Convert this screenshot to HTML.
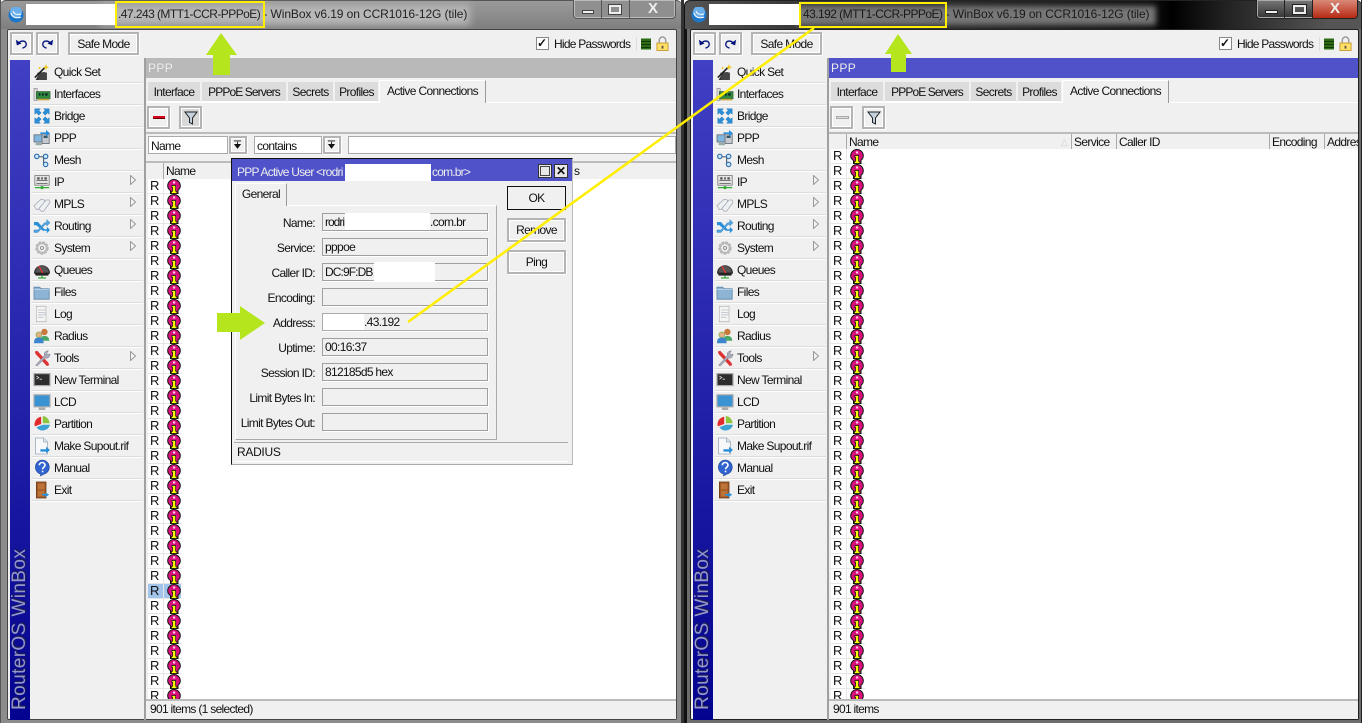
<!DOCTYPE html>
<html><head><meta charset="utf-8"><style>
html,body{margin:0;padding:0;width:1366px;height:723px;overflow:hidden;background:#fff}
*{box-sizing:border-box}
body{font-family:"Liberation Sans",sans-serif;font-size:12px;letter-spacing:-.65px;color:#111;position:relative}
div,svg,span.p{position:absolute}
.t{white-space:nowrap;line-height:14px;height:14px}
.b{background:#f0f0f0;border:2px solid #b4b4b4;outline:1px solid #fff;outline-offset:-3px;box-shadow:1px 1px 0 #fff}
.sep{height:2px;left:32px;width:111px;background:#dcdcdc;border-bottom:1px solid #fff}
.tab{background:#dcdcdc;height:20px;top:82px;text-align:center;line-height:21px;border-bottom:1px solid #fff}
.f{background:#f0f0f0;border:1px solid #a0a0a0;box-shadow:1px 1px 0 #fff;left:322px;width:166px;height:18px;padding:0 0 0 2px;line-height:17px;white-space:nowrap}
.l{right:1051px;text-align:right;white-space:nowrap;line-height:14px}
.rr{white-space:pre;line-height:15px;font-size:13px;letter-spacing:0;overflow:hidden}
.m{width:22px;height:22px;transform:translate(-2px,0) scale(.8)}
.tt{font-size:12px;letter-spacing:-.1px;color:#222}
.tt span{letter-spacing:-.55px}
.rb{left:0;color:#9397cc;font-size:19px;line-height:20px;letter-spacing:.4px;white-space:nowrap;text-shadow:1px 1px 1px #224;width:160px;height:20px;top:620px;transform:rotate(-90deg)}
</style></head><body>
<svg width="0" height="0" style="left:0;top:0">
<defs>
<symbol id="i" viewBox="0 0 14 15"><path d="M7 .5a6.300 6.300 0 0 1 6.300 6.300c0 2-1 3.500-2.300 4.400V14.500H3.500V11.500C1.800 10.500.7 8.800.7 6.800A6.300 6.300 0 0 1 7 .5z" fill="#d8107c" stroke="#111"/><rect x="6" y="2.500" width="2.200" height="2" fill="#f8d0e8"/><path d="M5 6.500h3.600v5.800h1.200v2.200H4.400v-2.200h1.200V8.500H5z" fill="#ff0" stroke="#111" stroke-width=".7"/></symbol>
<pattern id="ip" width="34" height="15" patternUnits="userSpaceOnUse"><use href="#i" x="19" y="0" width="14" height="15"/></pattern>
<symbol id="s1" viewBox="0 0 22 22"><path d="M3 21l5-9h9v9z" fill="#333"/><path d="M5 12l9-1 3 1v9H7z" fill="#444"/><path d="M2 18L14 6" stroke="#222" stroke-width="2"/><path d="M16 1l1 3 3 1-3 1-1 3-1-3-3-1 3-1z" fill="#f1c40f"/><circle cx="8" cy="6" r="1.200" fill="#f1c40f"/></symbol>
<symbol id="s2" viewBox="0 0 22 22"><rect x="1" y="4" width="4" height="15" fill="#ddd" stroke="#999"/><rect x="4" y="8" width="17" height="9" fill="#2f8b3c" stroke="#3e5f3e"/><path d="M7 10h2v3H7zM11 10h2v3h-2zM15 10h3v3h-3z" fill="#123"/><path d="M6 17h14v2H6z" fill="#c9a640"/></symbol>
<symbol id="s3" viewBox="0 0 22 22"><path d="M2 2h7l-2 2 3 3-3 3-3-3-2 2zM20 2v7l-2-2-3 3-3-3 3-3-2-2zM2 20v-7l2 2 3-3 3 3-3 3 2 2zM20 20h-7l2-2-3-3 3-3 3 3 2-2z" fill="#2a8ed8" stroke="#1868a8" stroke-width=".5"/></symbol>
<symbol id="s4" viewBox="0 0 22 22"><rect x="1" y="7" width="11" height="9" fill="#7fb6dc" stroke="#667"/><rect x="11" y="6" width="9" height="12" fill="#c4c9cf" stroke="#667"/><rect x="13" y="8" width="5" height="3" fill="#356"/><rect x="3" y="17" width="8" height="3" fill="#9aa"/><path d="M9 4h7V1l5 4-5 4V6H9z" fill="#2a8ed8"/></symbol>
<symbol id="s5" viewBox="0 0 22 22"><path d="M5 7h8v9h4" fill="none" stroke="#567" stroke-width="1.500"/><circle cx="4.500" cy="6.500" r="2.800" fill="#cfe4f7" stroke="#2a6fb0" stroke-width="1.400"/><circle cx="15.500" cy="6.500" r="2.800" fill="#cfe4f7" stroke="#2a6fb0" stroke-width="1.400"/><circle cx="15.500" cy="16.500" r="2.800" fill="#cfe4f7" stroke="#2a6fb0" stroke-width="1.400"/></symbol>
<symbol id="s6" viewBox="0 0 22 22"><rect x="2" y="3" width="18" height="12" fill="#e4e4e4" stroke="#777"/><path d="M4 9h14M4 13h14" stroke="#555"/><path d="M5 5h3v3H5zM10 5h2v3h-2zM14 5h3v3h-3z" fill="#555"/><path d="M2 18h18" stroke="#3a3" stroke-width="1.500"/><circle cx="11" cy="18" r="2" fill="#3a3"/></symbol>
<symbol id="s7" viewBox="0 0 22 22"><path d="M1 13L10 5l4 1 0 3-8 9-2 0z" fill="#eef1f2" stroke="#aab"/><path d="M7 17L16 6l4 0 1 3-8 11h-3z" fill="#eef1f2" stroke="#aab"/></symbol>
<symbol id="s8" viewBox="0 0 22 22"><path d="M1 6h5l8 9h3v-3l4 4-4 4v-3h-5L4 10H1z" fill="#2a8ed8"/><path d="M1 16h5l8-9h3V3l4 4-4 4V9h-2L6 19H1z" fill="#4fa6e6" stroke="#1868a8" stroke-width=".5"/></symbol>
<symbol id="s9" viewBox="0 0 22 22"><circle cx="11" cy="11" r="6.500" fill="none" stroke="#aaa" stroke-width="3.500" stroke-dasharray="3 1.400"/><circle cx="11" cy="11" r="6" fill="none" stroke="#bbb" stroke-width="2.400"/><circle cx="11" cy="11" r="2" fill="#e4e4e4" stroke="#888"/></symbol>
<symbol id="s10" viewBox="0 0 22 22"><path d="M1 15a10 10 0 0 1 20 0l-2 2H3z" fill="#333"/><path d="M3 14a8 8 0 0 1 16 0z" fill="#555"/><path d="M7 6l5 9" stroke="#e33" stroke-width="1.500"/><rect x="3" y="15" width="16" height="3" fill="#222"/><path d="M11 18v3M6 21h10" stroke="#3a3" stroke-width="1.500"/></symbol>
<symbol id="s11" viewBox="0 0 22 22"><path d="M1 5h7l2 2h10v13H1z" fill="#8db4d4" stroke="#5b84a8"/><path d="M1 8h19" stroke="#c3daee"/></symbol>
<symbol id="s12" viewBox="0 0 22 22"><path d="M4 1l1.500 1 1.500-1 1.500 1 1.500-1 1.500 1 1.500-1 1.500 1 1.500-1v20l-1.500-1-1.500 1-1.500-1-1.500 1-1.500-1-1.500 1-1.500-1-1.500 1z" fill="#f4f6f4" stroke="#aaa" stroke-width=".7"/><path d="M6 6h10M6 9h10M6 12h10M6 15h7" stroke="#bbc" /></symbol>
<symbol id="s13" viewBox="0 0 22 22"><circle cx="14" cy="6" r="4" fill="#c8793c"/><path d="M9 17c0-5 2-6 5-6s6 1 6 6z" fill="#4aa763"/><circle cx="7" cy="9.500" r="3.500" fill="#e6b184" stroke="#8a5"/><path d="M1 20c0-6 2-7 6-7s6 1 6 7z" fill="#3c86cf"/></symbol>
<symbol id="s14" viewBox="0 0 22 22"><path d="M2 3l3-1 14 15 1 3-3 1L3 6z" fill="#d33"/><path d="M3 20L14 8c-1-3 1-6 5-6l-2 3 1 2 3-1c0 4-3 6-6 5L5 21z" fill="#aab" stroke="#778" stroke-width=".6"/></symbol>
<symbol id="s15" viewBox="0 0 22 22"><rect x="1" y="3" width="20" height="15" fill="#2d2d2d" stroke="#aaa" stroke-width="1.500"/><path d="M4 6l3 2-3 2M8 10h3" stroke="#ddd" fill="none"/></symbol>
<symbol id="s16" viewBox="0 0 22 22"><rect x="1" y="2" width="20" height="15" fill="#3c93d3" stroke="#aaa" stroke-width="1.500"/><rect x="7" y="18" width="8" height="3" fill="#aaa"/></symbol>
<symbol id="s17" viewBox="0 0 22 22"><path d="M10 2v9l-8 3A9.500 9.500 0 0 1 10 2z" fill="#e22b2b"/><path d="M12 1a9.500 9.500 0 0 1 8.500 9H12z" fill="#8cc63f"/><path d="M21 12a9.500 9.500 0 0 1-17 3l8-3z" fill="#3ca2d4"/></symbol>
<symbol id="s18" viewBox="0 0 22 22"><path d="M3 1h10l5 5v15H3z" fill="#f6f8fa" stroke="#9ab"/><path d="M13 1v5h5" fill="#d8e4ef" stroke="#9ab"/><path d="M9 15h7v-3l5 4-5 4v-2H9z" fill="#2a8ed8"/></symbol>
<symbol id="s19" viewBox="0 0 22 22"><path d="M11 1a9 9 0 0 1 2 17.800L9 21l.5-2.300A9 9 0 0 1 11 1z" fill="#2f63cf" stroke="#1d3f8f" stroke-width=".7"/><path d="M7.700 7.500c0-4.500 7-4.500 7 0 0 2.500-3 2.500-3 5M11.700 14.300v2" stroke="#fff" stroke-width="2" fill="none"/></symbol>
<symbol id="s20" viewBox="0 0 22 22"><rect x="4" y="1" width="12" height="20" fill="#a45a26" stroke="#6a3a18"/><rect x="6" y="3" width="8" height="7" fill="#bd7338"/><rect x="6" y="12" width="8" height="7" fill="#bd7338"/><path d="M11 16h4v-2l5 3-5 3v-2h-4z" fill="#2a8ed8"/></symbol>
<symbol id="logo" viewBox="0 0 16 16"><circle cx="8" cy="8" r="7.500" fill="#1c76c8"/><circle cx="8" cy="5" r="6" fill="#6aaeea"/><path d="M3 6c1 4 5 6 10 4M5 4c1 3 4 4 8 3" stroke="#fff" fill="none"/></symbol>
<symbol id="und" viewBox="0 0 14 14"><path d="M4 7c1-3 7-4 8 0 .6 3-2 4.500-4 5" fill="none" stroke="#00107a" stroke-width="1.400"/><path d="M1 3l1 6 5-2z" fill="#00107a"/></symbol>
<symbol id="red" viewBox="0 0 14 14"><path d="M10 7C9 4 3 3 2 7c-.6 3 2 4.500 4 5" fill="none" stroke="#00107a" stroke-width="1.400"/><path d="M13 3l-1 6-5-2z" fill="#00107a"/></symbol>
<symbol id="fun" viewBox="0 0 14 14"><path d="M1 1h12L8.500 7v6l-3-1.500V7z" fill="#c4d0dc" stroke="#222" stroke-width="1"/></symbol>
<symbol id="dd" viewBox="0 0 10 10"><path d="M1 1h8M5 2v3M2 5h6L5 9z" stroke="#111" fill="#111"/></symbol>
<symbol id="lock" viewBox="0 0 14 15"><path d="M3.500 7V4a3.500 3.500 0 0 1 7 0v3" fill="none" stroke="#999" stroke-width="1.500"/><rect x="1" y="7" width="12" height="8" fill="#ffe068" stroke="#c89a28"/><rect x="6" y="10" width="2" height="3" fill="#654"/></symbol>
<symbol id="grn" viewBox="0 0 10 11"><rect width="10" height="11" fill="#2c6a14"/><path d="M0 3h10M0 6h10M0 9h10" stroke="#123a08"/></symbol>
<symbol id="arr" viewBox="0 0 6 10"><path d="M.5 .5L5.500 5 .5 9.500z" fill="#f4f4f4" stroke="#999"/></symbol>
</defs></svg>

<!-- LEFT WINDOW -->
<div style="left:0;top:0;width:682px;height:723px;background:#8c8c8c;border-radius:6px 6px 0 0"></div>
<div style="left:0;top:0;width:682px;height:29px;background:linear-gradient(#9a9a9a,#7f7f7f);border-top:1px solid #555;border-radius:6px 6px 0 0"></div>
<div style="left:100px;top:5px;width:370px;height:20px;background:#b8b8b8;filter:blur(4px)"></div>
<div style="left:0;top:0;bottom:0;width:1px;background:#555"></div>
<div style="left:681px;top:0;bottom:0;width:3px;background:#333"></div>
<div style="left:7px;top:29px;width:670px;height:691px;background:#f0f0f0;border:1px solid #444;border-radius:2px"></div>
<svg style="left:8px;top:7px" width="16" height="16"><use href="#logo"/></svg>
<div style="left:26px;top:4px;width:90px;height:21px;background:#fff"></div>
<div class="t tt" style="left:118px;top:7px"><span>.47.243 (MTT1-CCR-PPPoE)</span> - WinBox v6.19 on CCR1016-12G (tile)</div>
<div style="left:115px;top:1px;width:150px;height:27px;border:2px solid #ffee00"></div>
<div style="left:573px;top:0;width:103px;height:19px;background:#8f8f8f;border:1px solid #555;border-top:0;border-radius:0 0 4px 4px;box-shadow:inset 0 0 0 1px #bbb"></div>
<div style="left:601px;top:0;width:1px;height:19px;background:#555"></div>
<div style="left:629px;top:0;width:1px;height:19px;background:#555"></div>
<div style="left:582px;top:10px;width:12px;height:4px;background:#eee;border:1px solid #444"></div>
<div style="left:609px;top:5px;width:12px;height:9px;border:2px solid #eee;outline:1px solid #444"></div>
<div class="t" style="left:648px;top:2px;font-size:15px;font-weight:bold;color:#eee;letter-spacing:0">X</div>

<div class="b" style="left:10px;top:32px;width:23px;height:23px"></div><svg style="left:15px;top:37px" width="13" height="13"><use href="#und"/></svg>
<div class="b" style="left:36px;top:32px;width:23px;height:23px"></div><svg style="left:41px;top:37px" width="13" height="13"><use href="#red"/></svg>
<div class="b" style="left:68px;top:32px;width:71px;height:23px;text-align:center;line-height:20px">Safe Mode</div>
<div style="left:536px;top:37px;width:13px;height:13px;background:#fff;border:1px solid #888"></div>
<div class="t" style="left:537px;top:36px;font-size:12px;font-weight:bold;letter-spacing:0">✓</div>
<div class="t" style="left:554px;top:37px;letter-spacing:-.75px">Hide Passwords</div>
<div style="left:636px;top:37px;width:1px;height:14px;background:#ddd"></div>
<svg style="left:641px;top:38px" width="10" height="12"><use href="#grn"/></svg>
<svg style="left:656px;top:36px" width="13" height="15"><use href="#lock"/></svg>

<!-- left sidebar -->
<div style="left:10px;top:60px;width:20px;height:660px;background:linear-gradient(#4140c4,#03038f)"></div>
<div class="rb" style="left:-60px">RouterOS WinBox</div>
<svg style="left:33px;top:61px" class="m"><use href="#s1" width="22" height="22"/></svg>
<svg style="left:33px;top:83px" class="m"><use href="#s2" width="22" height="22"/></svg>
<svg style="left:33px;top:105px" class="m"><use href="#s3" width="22" height="22"/></svg>
<svg style="left:33px;top:127px" class="m"><use href="#s4" width="22" height="22"/></svg>
<svg style="left:33px;top:149px" class="m"><use href="#s5" width="22" height="22"/></svg>
<svg style="left:33px;top:171px" class="m"><use href="#s6" width="22" height="22"/></svg>
<svg style="left:33px;top:193px" class="m"><use href="#s7" width="22" height="22"/></svg>
<svg style="left:33px;top:215px" class="m"><use href="#s8" width="22" height="22"/></svg>
<svg style="left:33px;top:237px" class="m"><use href="#s9" width="22" height="22"/></svg>
<svg style="left:33px;top:259px" class="m"><use href="#s10" width="22" height="22"/></svg>
<svg style="left:33px;top:281px" class="m"><use href="#s11" width="22" height="22"/></svg>
<svg style="left:33px;top:303px" class="m"><use href="#s12" width="22" height="22"/></svg>
<svg style="left:33px;top:325px" class="m"><use href="#s13" width="22" height="22"/></svg>
<svg style="left:33px;top:347px" class="m"><use href="#s14" width="22" height="22"/></svg>
<svg style="left:33px;top:369px" class="m"><use href="#s15" width="22" height="22"/></svg>
<svg style="left:33px;top:391px" class="m"><use href="#s16" width="22" height="22"/></svg>
<svg style="left:33px;top:413px" class="m"><use href="#s17" width="22" height="22"/></svg>
<svg style="left:33px;top:435px" class="m"><use href="#s18" width="22" height="22"/></svg>
<svg style="left:33px;top:457px" class="m"><use href="#s19" width="22" height="22"/></svg>
<svg style="left:33px;top:479px" class="m"><use href="#s20" width="22" height="22"/></svg>
<div class="t" style="left:54px;top:65px">Quick Set</div><div class="sep" style="top:82px"></div>
<div class="t" style="left:54px;top:87px">Interfaces</div><div class="sep" style="top:104px"></div>
<div class="t" style="left:54px;top:109px">Bridge</div><div class="sep" style="top:126px"></div>
<div class="t" style="left:54px;top:131px">PPP</div><div class="sep" style="top:148px"></div>
<div class="t" style="left:54px;top:153px">Mesh</div><div class="sep" style="top:170px"></div>
<div class="t" style="left:54px;top:175px">IP</div><div class="sep" style="top:192px"></div>
<div class="t" style="left:54px;top:197px">MPLS</div><div class="sep" style="top:214px"></div>
<div class="t" style="left:54px;top:219px">Routing</div><div class="sep" style="top:236px"></div>
<div class="t" style="left:54px;top:241px">System</div><div class="sep" style="top:258px"></div>
<div class="t" style="left:54px;top:263px">Queues</div><div class="sep" style="top:280px"></div>
<div class="t" style="left:54px;top:285px">Files</div><div class="sep" style="top:302px"></div>
<div class="t" style="left:54px;top:307px">Log</div><div class="sep" style="top:324px"></div>
<div class="t" style="left:54px;top:329px">Radius</div><div class="sep" style="top:346px"></div>
<div class="t" style="left:54px;top:351px">Tools</div><div class="sep" style="top:368px"></div>
<div class="t" style="left:54px;top:373px">New Terminal</div><div class="sep" style="top:390px"></div>
<div class="t" style="left:54px;top:395px">LCD</div><div class="sep" style="top:412px"></div>
<div class="t" style="left:54px;top:417px">Partition</div><div class="sep" style="top:434px"></div>
<div class="t" style="left:54px;top:439px">Make Supout.rif</div><div class="sep" style="top:456px"></div>
<div class="t" style="left:54px;top:461px">Manual</div><div class="sep" style="top:478px"></div>
<div class="t" style="left:54px;top:483px">Exit</div><div class="sep" style="top:500px"></div>
<svg style="left:130px;top:175px" width="6" height="10"><use href="#arr"/></svg>
<svg style="left:130px;top:197px" width="6" height="10"><use href="#arr"/></svg>
<svg style="left:130px;top:219px" width="6" height="10"><use href="#arr"/></svg>
<svg style="left:130px;top:241px" width="6" height="10"><use href="#arr"/></svg>
<svg style="left:130px;top:351px" width="6" height="10"><use href="#arr"/></svg>

<!-- left ppp panel -->
<div style="left:144px;top:58px;width:2px;height:662px;background:#a0a0a0"></div>
<div style="left:146px;top:58px;width:530px;height:20px;background:#b9b9b9;color:#eee;line-height:20px;padding-left:2px;letter-spacing:.4px">PPP</div>
<div class="tab" style="left:148px;width:52px">Interface</div>
<div class="tab" style="left:202px;width:84px;letter-spacing:-.9px">PPPoE Servers</div>
<div class="tab" style="left:288px;width:45px">Secrets</div>
<div class="tab" style="left:335px;width:43px">Profiles</div>
<div style="left:146px;top:102px;width:530px;height:1px;background:#fff"></div>
<div style="left:379px;top:80px;width:107px;height:23px;background:#f0f0f0;border-top:1px solid #fff;border-left:1px solid #fff;border-right:1px solid #999;text-align:center;line-height:20px">Active Connections</div>
<div class="b" style="left:147px;top:106px;width:23px;height:23px"></div><div style="left:153px;top:116px;width:12px;height:3px;background:#d5001c;border-bottom:1px solid #600"></div>
<div class="b" style="left:179px;top:106px;width:23px;height:23px;background:#d8d8d8"></div><svg style="left:184px;top:111px" width="14" height="14"><use href="#fun"/></svg>
<div style="left:146px;top:132px;width:530px;height:2px;background:#bbb"></div>
<div style="left:148px;top:136px;width:80px;height:18px;background:#fff;border:1px solid #aaa;line-height:18px;padding-left:2px">Name</div>
<div class="b" style="left:229px;top:136px;width:18px;height:18px"></div><svg style="left:233px;top:140px" width="9" height="9"><use href="#dd"/></svg>
<div style="left:254px;top:136px;width:68px;height:18px;background:#fff;border:1px solid #aaa;line-height:18px;padding-left:2px">contains</div>
<div class="b" style="left:323px;top:136px;width:18px;height:18px"></div><svg style="left:327px;top:140px" width="9" height="9"><use href="#dd"/></svg>
<div style="left:348px;top:136px;width:328px;height:18px;background:#fff;border:1px solid #aaa"></div>
<div style="left:146px;top:161px;width:530px;height:2px;background:#bbb"></div>
<div style="left:163px;top:163px;width:1px;height:16px;background:#aaa"></div>
<div class="t" style="left:166px;top:164px">Name</div>
<div class="t" style="left:574px;top:164px">s</div>
<div style="left:148px;top:179px;width:528px;height:520px;background:#fff"></div>
<div style="left:148px;top:179px;width:34px;height:520px;background:repeating-linear-gradient(#fff 0 14px,#e6e6e6 14px 15px)"></div>
<div style="left:163px;top:179px;width:1px;height:520px;background:#e6e6e6"></div>
<div style="left:148px;top:584px;width:15px;height:14px;background:#a3c4ea"></div>
<div style="left:164px;top:584px;width:17px;height:14px;background:#a3c4ea"></div>
<svg style="left:148px;top:179px" width="34" height="520"><rect width="34" height="520" fill="url(#ip)"/></svg>
<div class="rr" style="left:150px;top:178px;width:12px;height:521px">R
R
R
R
R
R
R
R
R
R
R
R
R
R
R
R
R
R
R
R
R
R
R
R
R
R
R
R
R
R
R
R
R
R
R</div>
<div style="left:146px;top:699px;width:530px;height:20px;background:#f0f0f0;border-top:2px solid #bbb;line-height:17px;padding-left:4px;letter-spacing:-.7px">901 items (1 selected)</div>

<!-- dialog -->
<div style="left:231px;top:158px;width:342px;height:307px;background:#f0f0f0;border-top:1px solid #111;border-left:1px solid #111;border-right:1px solid #bbb;border-bottom:1px solid #aaa"></div>
<div style="left:232px;top:159px;width:340px;height:22px;background:#4f52c9;color:#eee;line-height:26px;padding-left:5px;letter-spacing:-.75px;white-space:nowrap">PPP Active User &lt;rodri</div>
<div style="left:345px;top:164px;width:86px;height:17px;background:#fff"></div>
<div class="t" style="left:432px;top:165px;color:#eee;letter-spacing:-.8px">com.br&gt;</div>
<div style="left:538px;top:164px;width:14px;height:14px;background:#e8e8e8;border:1px solid #333;box-shadow:inset 0 0 0 1px #e8e8e8,inset 0 0 0 2px #444"></div>
<div style="left:554px;top:164px;width:14px;height:14px;background:#e8e8e8;border:1px solid #333"></div>
<div class="t" style="left:556px;top:164px;font-weight:bold;font-size:12px;letter-spacing:0">✕</div>
<div style="left:235px;top:183px;width:52px;height:23px;background:#f0f0f0;border-top:1px solid #fff;border-left:1px solid #fff;border-right:1px solid #999;text-align:center;line-height:21px;z-index:2">General</div>
<div style="left:235px;top:205px;width:262px;height:235px;border:1px solid #aaa;border-top:1px solid #fff;border-left:1px solid #fff"></div>
<div class="l" style="top:216px">Name:</div><div class="f" style="top:213px;letter-spacing:-1px">rodri</div>
<div style="left:345px;top:213px;width:85px;height:17px;background:#fff"></div>
<div class="t" style="left:430px;top:215px">.com.br</div>
<div class="l" style="top:241px">Service:</div><div class="f" style="top:238px">pppoe</div>
<div class="l" style="top:266px">Caller ID:</div><div class="f" style="top:263px;letter-spacing:-.9px">DC:9F:DB</div>
<div style="left:374px;top:262px;width:61px;height:20px;background:#fff"></div>
<div class="l" style="top:291px">Encoding:</div><div class="f" style="top:288px"></div>
<div class="l" style="top:316px">Address:</div><div class="f" style="top:313px;padding-left:41px;border-color:#aaa">.43.192</div>
<div style="left:323px;top:314px;width:41px;height:16px;background:#fff"></div>
<div class="l" style="top:341px">Uptime:</div><div class="f" style="top:338px">00:16:37</div>
<div class="l" style="top:366px">Session ID:</div><div class="f" style="top:363px;letter-spacing:-.7px">812185d5 hex</div>
<div class="l" style="top:391px">Limit Bytes In:</div><div class="f" style="top:388px"></div>
<div class="l" style="top:416px">Limit Bytes Out:</div><div class="f" style="top:413px"></div>
<div style="left:507px;top:186px;width:59px;height:24px;background:#f0f0f0;border:1px solid #111;text-align:center;line-height:22px">OK</div>
<div class="b" style="left:507px;top:218px;width:59px;height:24px;text-align:center;line-height:20px">Remove</div>
<div class="b" style="left:507px;top:250px;width:59px;height:24px;text-align:center;line-height:20px">Ping</div>
<div style="left:234px;top:442px;width:334px;height:20px;border-top:1px solid #aaa;border-bottom:1px solid #fff;line-height:19px;padding-left:3px;letter-spacing:-.3px">RADIUS</div>

<!-- RIGHT WINDOW -->
<div style="left:684px;top:0;width:678px;height:723px;background:#6c6c6c;border-radius:6px 6px 0 0;border-left:3px solid #111"></div>
<div style="left:685px;top:0;width:677px;height:29px;background:linear-gradient(90deg,#555 0,#3a3a3a 15%,#111 68%,#000 72%,#222 80%,#555 95%);border-top:1px solid #222;border-radius:6px 6px 0 0"></div>
<div style="left:796px;top:6px;width:360px;height:19px;background:#777;filter:blur(3px)"></div>
<div style="left:1361px;top:0;bottom:0;width:1px;background:#222"></div>
<div style="left:690px;top:29px;width:669px;height:691px;background:#f0f0f0;border:1px solid #222;border-radius:2px"></div>
<svg style="left:691px;top:7px" width="16" height="16"><use href="#logo"/></svg>
<div style="left:709px;top:4px;width:91px;height:21px;background:#fff"></div>
<div class="t tt" style="left:803px;top:7px;color:#1a1a1a"><span>43.192 (MTT1-CCR-PPPoE)</span> - WinBox v6.19 on CCR1016-12G (tile)</div>
<div style="left:799px;top:2px;width:148px;height:26px;border:2px solid #ffee00"></div>
<div style="left:1256px;top:0;width:64px;height:19px;background:linear-gradient(#777,#333);border:1px solid #222;border-top:0;border-radius:0 0 0 4px;box-shadow:inset 0 0 0 1px #aaa"></div>
<div style="left:1284px;top:0;width:1px;height:19px;background:#222"></div>
<div style="left:1312px;top:0;width:46px;height:19px;background:linear-gradient(#d98a78,#b52a14);border:1px solid #222;border-top:0;border-radius:0 0 4px 0"></div>
<div style="left:1265px;top:10px;width:13px;height:4px;background:#eee;border:1px solid #222"></div>
<div style="left:1293px;top:5px;width:13px;height:9px;border:2px solid #eee;outline:1px solid #222"></div>
<div class="t" style="left:1330px;top:2px;font-size:15px;font-weight:bold;color:#eee;letter-spacing:0">X</div>

<div class="b" style="left:693px;top:32px;width:23px;height:23px"></div><svg style="left:698px;top:37px" width="13" height="13"><use href="#und"/></svg>
<div class="b" style="left:719px;top:32px;width:23px;height:23px"></div><svg style="left:724px;top:37px" width="13" height="13"><use href="#red"/></svg>
<div class="b" style="left:751px;top:32px;width:71px;height:23px;text-align:center;line-height:20px">Safe Mode</div>
<div style="left:1219px;top:37px;width:13px;height:13px;background:#fff;border:1px solid #888"></div>
<div class="t" style="left:1220px;top:36px;font-size:12px;font-weight:bold;letter-spacing:0">✓</div>
<div class="t" style="left:1237px;top:37px;letter-spacing:-.75px">Hide Passwords</div>
<div style="left:1319px;top:37px;width:1px;height:14px;background:#ddd"></div>
<svg style="left:1324px;top:38px" width="10" height="12"><use href="#grn"/></svg>
<svg style="left:1339px;top:36px" width="13" height="15"><use href="#lock"/></svg>

<div style="left:693px;top:60px;width:20px;height:660px;background:linear-gradient(#4140c4,#03038f)"></div>
<div class="rb" style="left:623px">RouterOS WinBox</div>
<svg style="left:716px;top:61px" class="m"><use href="#s1" width="22" height="22"/></svg>
<svg style="left:716px;top:83px" class="m"><use href="#s2" width="22" height="22"/></svg>
<svg style="left:716px;top:105px" class="m"><use href="#s3" width="22" height="22"/></svg>
<svg style="left:716px;top:127px" class="m"><use href="#s4" width="22" height="22"/></svg>
<svg style="left:716px;top:149px" class="m"><use href="#s5" width="22" height="22"/></svg>
<svg style="left:716px;top:171px" class="m"><use href="#s6" width="22" height="22"/></svg>
<svg style="left:716px;top:193px" class="m"><use href="#s7" width="22" height="22"/></svg>
<svg style="left:716px;top:215px" class="m"><use href="#s8" width="22" height="22"/></svg>
<svg style="left:716px;top:237px" class="m"><use href="#s9" width="22" height="22"/></svg>
<svg style="left:716px;top:259px" class="m"><use href="#s10" width="22" height="22"/></svg>
<svg style="left:716px;top:281px" class="m"><use href="#s11" width="22" height="22"/></svg>
<svg style="left:716px;top:303px" class="m"><use href="#s12" width="22" height="22"/></svg>
<svg style="left:716px;top:325px" class="m"><use href="#s13" width="22" height="22"/></svg>
<svg style="left:716px;top:347px" class="m"><use href="#s14" width="22" height="22"/></svg>
<svg style="left:716px;top:369px" class="m"><use href="#s15" width="22" height="22"/></svg>
<svg style="left:716px;top:391px" class="m"><use href="#s16" width="22" height="22"/></svg>
<svg style="left:716px;top:413px" class="m"><use href="#s17" width="22" height="22"/></svg>
<svg style="left:716px;top:435px" class="m"><use href="#s18" width="22" height="22"/></svg>
<svg style="left:716px;top:457px" class="m"><use href="#s19" width="22" height="22"/></svg>
<svg style="left:716px;top:479px" class="m"><use href="#s20" width="22" height="22"/></svg>
<div class="t" style="left:737px;top:65px">Quick Set</div><div class="sep" style="left:715px;top:82px"></div>
<div class="t" style="left:737px;top:87px">Interfaces</div><div class="sep" style="left:715px;top:104px"></div>
<div class="t" style="left:737px;top:109px">Bridge</div><div class="sep" style="left:715px;top:126px"></div>
<div class="t" style="left:737px;top:131px">PPP</div><div class="sep" style="left:715px;top:148px"></div>
<div class="t" style="left:737px;top:153px">Mesh</div><div class="sep" style="left:715px;top:170px"></div>
<div class="t" style="left:737px;top:175px">IP</div><div class="sep" style="left:715px;top:192px"></div>
<div class="t" style="left:737px;top:197px">MPLS</div><div class="sep" style="left:715px;top:214px"></div>
<div class="t" style="left:737px;top:219px">Routing</div><div class="sep" style="left:715px;top:236px"></div>
<div class="t" style="left:737px;top:241px">System</div><div class="sep" style="left:715px;top:258px"></div>
<div class="t" style="left:737px;top:263px">Queues</div><div class="sep" style="left:715px;top:280px"></div>
<div class="t" style="left:737px;top:285px">Files</div><div class="sep" style="left:715px;top:302px"></div>
<div class="t" style="left:737px;top:307px">Log</div><div class="sep" style="left:715px;top:324px"></div>
<div class="t" style="left:737px;top:329px">Radius</div><div class="sep" style="left:715px;top:346px"></div>
<div class="t" style="left:737px;top:351px">Tools</div><div class="sep" style="left:715px;top:368px"></div>
<div class="t" style="left:737px;top:373px">New Terminal</div><div class="sep" style="left:715px;top:390px"></div>
<div class="t" style="left:737px;top:395px">LCD</div><div class="sep" style="left:715px;top:412px"></div>
<div class="t" style="left:737px;top:417px">Partition</div><div class="sep" style="left:715px;top:434px"></div>
<div class="t" style="left:737px;top:439px">Make Supout.rif</div><div class="sep" style="left:715px;top:456px"></div>
<div class="t" style="left:737px;top:461px">Manual</div><div class="sep" style="left:715px;top:478px"></div>
<div class="t" style="left:737px;top:483px">Exit</div><div class="sep" style="left:715px;top:500px"></div>
<svg style="left:813px;top:175px" width="6" height="10"><use href="#arr"/></svg>
<svg style="left:813px;top:197px" width="6" height="10"><use href="#arr"/></svg>
<svg style="left:813px;top:219px" width="6" height="10"><use href="#arr"/></svg>
<svg style="left:813px;top:241px" width="6" height="10"><use href="#arr"/></svg>
<svg style="left:813px;top:351px" width="6" height="10"><use href="#arr"/></svg>

<div style="left:827px;top:58px;width:2px;height:662px;background:#a0a0a0"></div>
<div style="left:829px;top:58px;width:529px;height:20px;background:#4f52c9;color:#eee;line-height:20px;padding-left:2px;letter-spacing:.4px">PPP</div>
<div class="tab" style="left:831px;width:52px">Interface</div>
<div class="tab" style="left:885px;width:84px;letter-spacing:-.9px">PPPoE Servers</div>
<div class="tab" style="left:971px;width:45px">Secrets</div>
<div class="tab" style="left:1018px;width:43px">Profiles</div>
<div style="left:829px;top:102px;width:529px;height:1px;background:#fff"></div>
<div style="left:1062px;top:80px;width:107px;height:23px;background:#f0f0f0;border-top:1px solid #fff;border-left:1px solid #fff;border-right:1px solid #999;text-align:center;line-height:20px">Active Connections</div>
<div class="b" style="left:830px;top:106px;width:23px;height:23px"></div><div style="left:836px;top:116px;width:13px;height:3px;background:#dcdcdc;border:1px solid #aaa"></div>
<div class="b" style="left:862px;top:106px;width:23px;height:23px"></div><svg style="left:867px;top:111px" width="14" height="14"><use href="#fun"/></svg>
<div style="left:829px;top:132px;width:529px;height:2px;background:#bbb"></div>
<div style="left:846px;top:134px;width:1px;height:15px;background:#aaa"></div>
<div style="left:1071px;top:134px;width:1px;height:15px;background:#aaa"></div>
<div style="left:1116px;top:134px;width:1px;height:15px;background:#aaa"></div>
<div style="left:1269px;top:134px;width:1px;height:15px;background:#aaa"></div>
<div style="left:1324px;top:134px;width:1px;height:15px;background:#aaa"></div>
<div class="t" style="left:849px;top:135px">Name</div>
<div class="t" style="left:1061px;top:135px;color:#ccc;font-size:9px">△</div>
<div class="t" style="left:1074px;top:135px">Service</div>
<div class="t" style="left:1119px;top:135px">Caller ID</div>
<div class="t" style="left:1272px;top:135px">Encoding</div>
<div style="left:1325px;top:134px;width:33px;height:15px;overflow:hidden"><div class="t" style="left:2px;top:1px">Address</div></div>
<div style="left:831px;top:149px;width:527px;height:550px;background:#fff"></div>
<div style="left:831px;top:149px;width:34px;height:550px;background:repeating-linear-gradient(#fff 0 14px,#e6e6e6 14px 15px)"></div>
<div style="left:846px;top:149px;width:1px;height:550px;background:#e6e6e6"></div>
<svg style="left:831px;top:149px" width="34" height="550"><rect width="34" height="550" fill="url(#ip)"/></svg>
<div class="rr" style="left:833px;top:148px;width:12px;height:551px">R
R
R
R
R
R
R
R
R
R
R
R
R
R
R
R
R
R
R
R
R
R
R
R
R
R
R
R
R
R
R
R
R
R
R
R
R</div>
<div style="left:829px;top:699px;width:529px;height:20px;background:#f0f0f0;border-top:2px solid #bbb;line-height:17px;padding-left:4px;letter-spacing:-.7px">901 items</div>

<!-- annotations -->
<svg style="left:0;top:0" width="1366" height="723">
<path d="M408 322L814 28" stroke="#ffee00" stroke-width="2.500" fill="none"/>
<path d="M221 33L237 55H230V75H213V55H206z" fill="#b5e61d"/>
<path d="M898 34L912 54H906V72H891V54H885z" fill="#b5e61d"/>
<path d="M265 323L240 306V313H217V332H240V340z" fill="#b5e61d"/>
</svg>
</body></html>
